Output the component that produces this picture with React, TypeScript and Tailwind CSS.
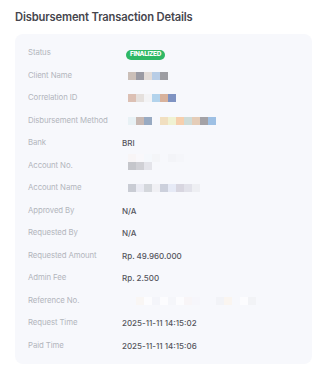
type Row = {
  label: string;
  value?: string;
  badge?: string;
  pixels?: string[];
  faint?: string[];
};

// blurred-out values are drawn as rows of colored 8px tiles
const rows: Row[] = [
  { label: "Status", badge: "FINALIZED" },
  { label: "Client Name", pixels: ["#cbbfb8", "#9a9aa3", "#e3dcd8", "#b8cde6", "#9d9da2"] },
  { label: "Correlation ID", pixels: ["#dcc0b4", "#e5e0dd", "#f3f3f5", "#b3d3ec", "#d8b29c", "#7f93c2"] },
  {
    label: "Disbursement Method",
    pixels: ["#e8f1f5", "#c8b8b2", "#98aac2", "#f7f8fc", "#f1dfc0", "#f0f2d2", "#f6cfad", "#cfdcd8", "#e5cdb8", "#a4a2a6", "#9ec0e4"],
  },
  { label: "Bank", value: "BRI" },
  {
    label: "Account No.",
    faint: ["#f8f5f6", "#f9f8fb", "#f5f8fc", "#f4f5f8", "#f7f8fc", "#f3f4f8", "#f5f6fa"],
    pixels: ["#c5c6cb", "#d0d0d5", "#e4e4ea"],
  },
  {
    label: "Account Name",
    pixels: ["#c9ccd4", "#eaebf3", "#d4d7dc", "#f0f0f4", "#ccd0dc", "#e6eaf6", "#d8d6e0", "#e2e2ea", "#eeeff3"],
  },
  { label: "Approved By", value: "N/A" },
  { label: "Requested By", value: "N/A" },
  { label: "Requested Amount", value: "Rp. 49.960.000" },
  { label: "Admin Fee", value: "Rp. 2.500" },
  {
    label: "Reference No.",
    pixels: ["#f7f8fc", "#f9f6f4", "#fcfcfe", "#f4f5fa", "#fcfcfe", "#f5f6fa", "#fcfcfe", "#f8f5f7", "#f6f6fb", "#f7f8fc", "#f7f8fc", "#f2f3f7", "#faf5f0", "#f7f8fc", "#fcfcfe", "#f2f3f6", "#f7f8fc"],
  },
  { label: "Request Time", value: "2025-11-11 14:15:02" },
  { label: "Paid Time", value: "2025-11-11 14:15:06" },
];

function Tiles({ colors }: { colors: string[] }) {
  return (
    <div className="ml-[6px] flex h-[8px]">
      {colors.map((c, i) => (
        <span key={i} className="h-full w-[8px]" style={{ backgroundColor: c }} />
      ))}
    </div>
  );
}

export default function App() {
  return (
    <div className="min-h-[376px] w-[325px] bg-white px-[15px] pt-[9px] font-['Inter',sans-serif]">
      <h2 className="text-[11.2px] font-semibold leading-[16px] tracking-[-0.15px] text-[#46464d]">
        Disbursement Transaction Details
      </h2>

      <div className="mt-[9px] w-[297px] rounded-[8px] bg-[#f7f8fc] pb-[7px] pl-[13px] pt-[8px]">
        {rows.map((row) => (
          <div key={row.label} className="flex h-[22.5px] items-center">
            <div className="w-[94px] shrink-0 text-[7.8px] tracking-[-0.1px] text-[#b3b6bd]">
              {row.label}
            </div>
            <div className="text-[8px] font-medium text-[#55555c]">
              {row.badge && (
                <span className="ml-[4px] inline-flex h-[10px] items-center rounded-full bg-[#2fb865] px-[4px] text-[6.4px] font-extrabold tracking-[-0.3px] text-white">
                  {row.badge}
                </span>
              )}
              {row.value}
              {row.faint && (
                <div className="-mt-[8px] flex flex-col">
                  <Tiles colors={row.faint} />
                  {row.pixels && <Tiles colors={row.pixels} />}
                </div>
              )}
              {!row.faint && row.pixels && <Tiles colors={row.pixels} />}
            </div>
          </div>
        ))}
      </div>
    </div>
  );
}
